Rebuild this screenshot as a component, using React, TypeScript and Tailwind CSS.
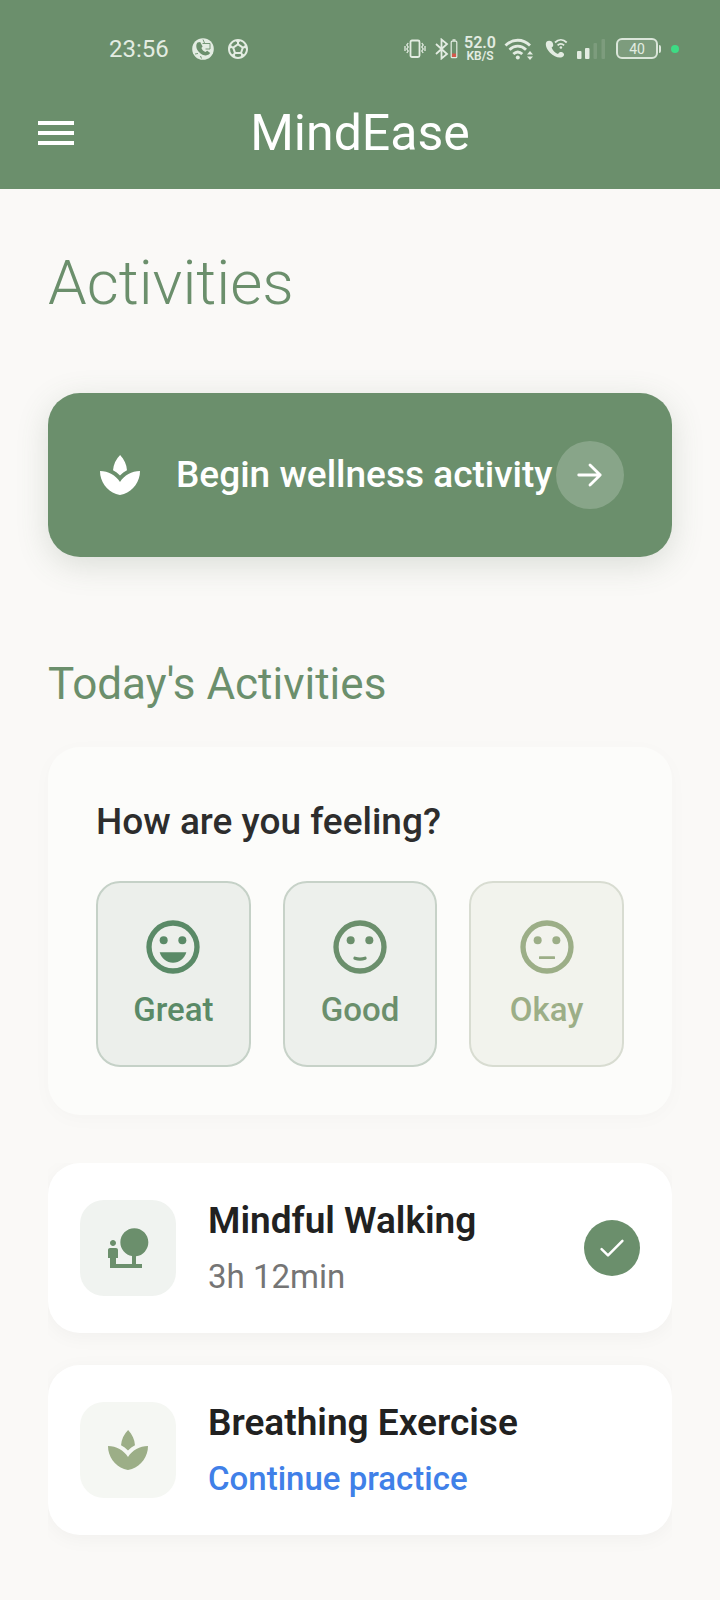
import type { ReactNode } from "react";
import { MdMenu, MdNaturePeople, MdSpa, MdSportsSoccer } from "react-icons/md";

function StatusBar() {
    return (
        <div className="flex h-[77px] items-center justify-between pt-5 pl-[109px] pr-[41px] text-[#e3ece2]">
            <div className="flex items-center">
                <span className="text-2xl">23:56</span>
                <svg viewBox="0 0 24 24" className="ml-[22px] h-6 w-6">
                    <circle cx="12" cy="12" r="10.8" fill="currentColor" />
                    <path d="M6.500 5.500C4.500 8 5 12 8.200 15.200s6.800 4 9.600 2.400l1.400-1.600-3-2.200-1.800 1.100c-1.900-.8-3.300-2.200-4-4l1.200-1.500L9.200 5z" fill="#6b8f6c" />
                    <path d="M11.500 6.500h7.500v5.500h-4.500" fill="none" stroke="#6b8f6c" strokeWidth=".9" />
                    <path d="M12 2.500l1.500 3.500M4 17l3-.5M9.500 19l1 2.500" stroke="#6b8f6c" strokeWidth=".9" />
                </svg>
                <MdSportsSoccer className="ml-[11px] h-6 w-6" />
            </div>

            <div className="flex items-center">
                {/* Vibrate */}
                <svg viewBox="0 0 22 22" className="h-[22px] w-[22px]" fill="none" stroke="currentColor">
                    <rect x="6.500" y="2.500" width="9" height="16.500" rx="1.500" strokeWidth="1.800" />
                    <path d="M4.200 5L2.800 7 4.200 9l-1.400 2 1.400 2-1.400 2M1 8v5M17.800 5l1.400 2-1.400 2 1.400 2-1.400 2 1.400 2M21 8v5" strokeWidth="1.300" />
                </svg>
                {/* Bluetooth with device battery */}
                <svg viewBox="0 0 24 22" className="ml-2 h-[22px] w-6" fill="none" stroke="currentColor">
                    <path d="M2 6l11 10-5.500 4.500v-19L13 6 2 16" strokeWidth="1.800" />
                    <rect x="17.200" y="3.200" width="5.600" height="16.500" rx="1" strokeWidth="1.200" />
                    <path d="M18.500 2h3" strokeWidth="1.500" />
                    <rect x="18" y="15.500" width="4" height="3.500" fill="#d4574c" stroke="none" />
                </svg>
                <div className="ml-1.5 flex flex-col items-center font-semibold">
                    <span className="text-base leading-[14px]">52.0</span>
                    <span className="text-xs leading-[12px]">KB/S</span>
                </div>
                {/* Wifi */}
                <svg viewBox="0 0 30 24" className="ml-2 h-6 w-[30px]" fill="none" stroke="currentColor">
                    <path d="M1.500 8.500c7-7 17.500-7 24.500 0M5.500 12.800c4.800-4.800 11.700-4.800 16.500 0M9.300 17c2.800-2.600 6.200-2.600 9 0" strokeWidth="2.800" />
                    <circle cx="13.800" cy="20.500" r="2" fill="currentColor" stroke="none" />
                    <path d="M23 17.500l3-3.500 3 3.500zM23 19.500l3 3.500 3-3.500z" fill="currentColor" stroke="none" />
                </svg>
                {/* Wifi calling */}
                <svg viewBox="0 0 24 24" className="ml-2.5 h-6 w-6" fill="none" stroke="currentColor">
                    <path d="M2.500 4.800C1 7 2 11.500 6 15.700s9.300 5.700 12.300 4.300c1.800-.9 2.200-2.700 1.400-3.600-.9-1-2.700-1.500-3.900-1.200-.9.3-1.200 1.100-1.800 1.700-2.800-1-5.500-3.600-6.400-6.500.7-.6 1.500-1 1.600-2 .1-1.300-.5-3-1.500-3.800-1.300-1.100-4-1.100-5.200.2z" fill="currentColor" stroke="none" />
                    <path d="M11 5.500c3.500-3.400 8.200-3.400 11.700 0M13.600 8.300c2-2 4.500-2 6.500 0" strokeWidth="1.800" />
                    <circle cx="16.900" cy="10.500" r="1.300" fill="currentColor" stroke="none" />
                </svg>
                {/* Signal */}
                <svg viewBox="0 0 30 22" className="ml-2 h-[22px] w-[30px]" fill="currentColor">
                    <rect x="1" y="13" width="4.500" height="8" rx="1" />
                    <rect x="9" y="10" width="4.500" height="11" rx="1" />
                    <rect x="17.500" y="5" width="3.500" height="16" rx="1" opacity=".15" />
                    <rect x="25.500" y="1" width="3.500" height="20" rx="1" opacity=".15" />
                </svg>
                <div className="ml-2.5 flex h-[21px] w-[42px] items-center justify-center rounded-md border-2 border-[#dbe6da] bg-[#7d9c7d] text-sm leading-none">
                    40
                </div>
                <div className="ml-px h-2 w-0.5 rounded-r bg-[#dbe6da]" />
                <div className="ml-2.5 h-2 w-2 rounded-full bg-[#3ddc84]" />
            </div>
        </div>
    );
}

const faceRing = "M12 2a10 10 0 1 0 0 20 10 10 0 0 0 0-20zm0 18a8 8 0 1 1 0-16 8 8 0 0 1 0 16z";

function Face({ children }: { children: ReactNode }) {
    return (
        <svg viewBox="0 0 24 24" className="h-16 w-16" fill="currentColor">
            <path d={faceRing} />
            <circle cx="8.500" cy="9.500" r="1.500" />
            <circle cx="15.500" cy="9.500" r="1.500" />
            {children}
        </svg>
    );
}

const moods = [
    {
        label: "Great",
        style: "border-[#c5d1c7] bg-[#ecefeb] text-[#5a8a67]",
        mouth: <path d="M17 14H7c.7 2.300 2.600 3.900 5 3.900s4.300-1.600 5-3.900z" />,
    },
    {
        label: "Good",
        style: "border-[#c7d2c8] bg-[#edf0ec] text-[#6b8f6c]",
        mouth: <path d="M10.100 16.200q1.900.7 3.800 0" fill="none" stroke="currentColor" strokeWidth="1.200" strokeLinecap="round" />,
    },
    {
        label: "Okay",
        style: "border-[#d8dcd1] bg-[#f2f3ed] text-[#9cae87]",
        mouth: <rect x="9" y="15.500" width="6" height="1" rx=".2" />,
    },
];

export default function App() {
    return (
        <div className="min-h-screen bg-[#faf9f7] pb-12 font-[Roboto,sans-serif]">
            <header className="bg-[#6b8f6c]">
                <StatusBar />
                <div className="grid h-28 grid-cols-[48px_1fr_48px] items-center px-8 text-white">
                    <button type="button" aria-label="Open menu">
                        <MdMenu className="h-12 w-12" />
                    </button>
                    <span className="text-center text-[50px] leading-[60px]">MindEase</span>
                </div>
            </header>

            <main className="px-12 pt-14">
                <h1 className="text-[62px] leading-[76px] font-light text-[#6b8f6c]">Activities</h1>

                <button
                    type="button"
                    className="mt-[72px] flex w-full items-center rounded-[32px] bg-[#6b8f6c] p-12 text-white shadow-[0_8px_32px_rgba(75,100,75,0.18)]"
                >
                    <MdSpa className="h-12 w-12" />
                    <span className="ml-8 text-[37px] leading-[44px] font-medium">Begin wellness activity</span>
                    <span className="ml-auto rounded-full bg-white/20 p-4">
                        <svg viewBox="0 0 24 24" className="h-9 w-9" fill="none" stroke="currentColor" strokeWidth="1.900" strokeLinecap="round" strokeLinejoin="round">
                            <path d="M4.500 12h14.300M12 5.300l6.800 6.700-6.800 6.700" />
                        </svg>
                    </span>
                </button>

                <h2 className="mt-[100px] text-[44px] leading-[54px] text-[#6b8f6c]">Today's Activities</h2>

                <section className="mt-9 rounded-[32px] bg-[#fcfcfa] p-12 shadow-[0_4px_20px_rgba(0,0,0,0.025)]">
                    <h3 className="text-[37px] leading-[54px] font-medium text-[#2d2d2d]">How are you feeling?</h3>
                    <div className="mt-8 grid grid-cols-3 gap-8">
                        {moods.map((mood) => (
                            <button
                                key={mood.label}
                                type="button"
                                className={`flex flex-col items-center gap-2 rounded-3xl border-2 py-8 ${mood.style}`}
                            >
                                <Face>{mood.mouth}</Face>
                                <span className="text-[33px] leading-[46px] font-medium">{mood.label}</span>
                            </button>
                        ))}
                    </div>
                </section>

                <ul className="mt-12 flex flex-col gap-8 overflow-hidden pb-5">
                    <li className="flex items-center rounded-[32px] bg-white p-8 shadow-[0_4px_20px_rgba(0,0,0,0.04)]">
                        <div className="flex h-24 w-24 items-center justify-center rounded-3xl bg-[#f0f3f0] text-[#6b8f6c]">
                            <MdNaturePeople className="h-12 w-12" />
                        </div>
                        <div className="ml-8 flex-1">
                            <h3 className="text-[37px] leading-[52px] font-semibold text-[#212121]">Mindful Walking</h3>
                            <p className="mt-1.5 text-[33px] leading-[48px] text-[#757575]">3h 12min</p>
                        </div>
                        <div className="rounded-full bg-[#6b8f6c] p-3 text-white">
                            <svg viewBox="0 0 24 24" className="h-8 w-8" fill="none" stroke="currentColor" strokeWidth="1.900" strokeLinecap="round" strokeLinejoin="round">
                                <path d="M4.200 12.900L9 17.500 19.800 6.700" />
                            </svg>
                        </div>
                    </li>
                    <li className="flex items-center rounded-[32px] bg-white p-8 shadow-[0_4px_20px_rgba(0,0,0,0.04)]">
                        <div className="flex h-24 w-24 items-center justify-center rounded-3xl bg-[#f5f7f3] text-[#9cae87]">
                            <MdSpa className="h-12 w-12" />
                        </div>
                        <div className="ml-8 flex-1">
                            <h3 className="text-[37px] leading-[52px] font-semibold text-[#212121]">Breathing Exercise</h3>
                            <a href="#" className="mt-1.5 block text-[33px] leading-[48px] font-medium text-[#4080e8]">
                                Continue practice
                            </a>
                        </div>
                    </li>
                </ul>
            </main>
        </div>
    );
}
